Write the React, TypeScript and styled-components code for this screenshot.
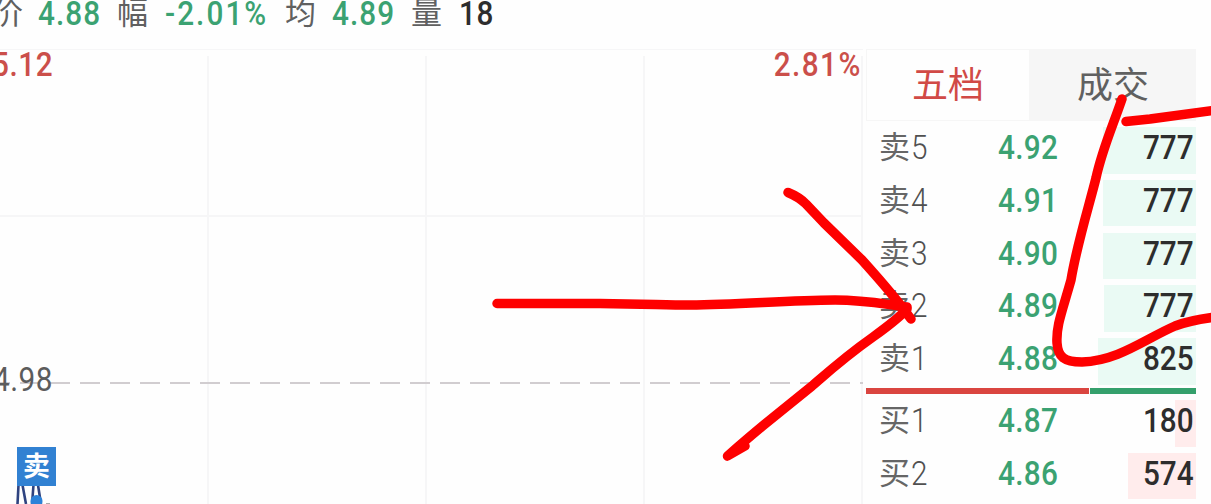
import { FC } from "react"
import styled, { createGlobalStyle } from "styled-components"

interface Quote {
  label: string
  level: string
  price: string
  volume: string
  bar: number
}

const sells: Quote[] = [
  { label: "卖", level: "5", price: "4.92", volume: "777", bar: 93 },
  { label: "卖", level: "4", price: "4.91", volume: "777", bar: 93 },
  { label: "卖", level: "3", price: "4.90", volume: "777", bar: 93 },
  { label: "卖", level: "2", price: "4.89", volume: "777", bar: 92 },
  { label: "卖", level: "1", price: "4.88", volume: "825", bar: 98 },
]

const buys: Quote[] = [
  { label: "买", level: "1", price: "4.87", volume: "180", bar: 21 },
  { label: "买", level: "2", price: "4.86", volume: "574", bar: 68 },
]

const QuoteRow: FC<{ quote: Quote; side: "sell" | "buy" }> = ({ quote, side }) => (
  <Row>
    <Label>
      {quote.label}
      <Level>{quote.level}</Level>
    </Label>
    <Price>{quote.price}</Price>
    <VolumeCell>
      <VolumeBar $side={side} style={{ width: quote.bar }} />
      <Volume>{quote.volume}</Volume>
    </VolumeCell>
  </Row>
)

const App: FC = () => {
  return (
    <Page>
      <GlobalStyle />
      <Summary>
        <Name $width={46}>价</Name>
        <Value $width={79}>4.88</Value>
        <Name $width={48}>幅</Name>
        <Value $width={120} $tracking={2.3}>
          -2.01%
        </Value>
        <Name $width={47}>均</Name>
        <Value $width={79}>4.89</Value>
        <Name $width={48}>量</Name>
        <Value $width={50} $tracking={0.6} $dark>
          18
        </Value>
      </Summary>
      <Body>
        <Chart>
          <ChartCanvas width="863" height="455" viewBox="0 0 863 455">
            <g stroke="#f6f6f7" strokeWidth="2">
              <path d="M0 .5H863" strokeWidth="1" />
              <path d="M208 7V455M426 7V455M644 7V455M862 7V455" />
              <path d="M0 167H861" />
            </g>
            <path d="M-10 334H863" stroke="#d1cdd0" strokeWidth="2" strokeDasharray="20 10" />
            <g stroke="#2f4380" strokeWidth="2.6" fill="none">
              <path d="M18.5 436L17.5 455M22.5 436L26 455M33.5 436L32 455M38 436L41 455" />
            </g>
            <circle cx="36.5" cy="452" r="6" fill="#2b82d9" />
            <path d="M46 454.5H50" stroke="#aaa" strokeWidth="1" />
          </ChartCanvas>
          <TopPrice>5.12</TopPrice>
          <TopPercent>2.81%</TopPercent>
          <MidPrice>4.98</MidPrice>
          <SellMark>卖</SellMark>
        </Chart>
        <Book>
          <Tabs>
            <Tab $active>五档</Tab>
            <Tab>成交</Tab>
          </Tabs>
          <Rows>
            {sells.map((q) => (
              <QuoteRow key={q.level} quote={q} side="sell" />
            ))}
          </Rows>
          <Ratio>
            <RatioBuy />
            <RatioSell />
          </Ratio>
          <Rows>
            {buys.map((q) => (
              <QuoteRow key={q.level} quote={q} side="buy" />
            ))}
          </Rows>
        </Book>
      </Body>
      <Marker width="1211" height="504" viewBox="0 0 1211 504">
        <path d="M497 303.5H600C650 304 665 305 690 305C740 304.5 785 300.5 835 300C865 300 880 303.5 907 307" />
        <path d="M788 192.5Q799 197 806 204L824 223L862 260C880 280 892 294 902 307L911 319" />
        <path d="M907 309Q898 319 873 337C846 356 835 366 812 386L765 424Q748 438 727.5 456L745 446" />
        <path d="M1122 99C1112 128 1102 150 1096 178C1089 206 1077 244 1071 280C1062 312 1056 326 1057 343C1058 357 1064 362 1082 362C1118 361 1145 339 1175 326Q1191 320 1216 317" />
        <path d="M1126 121.5L1150 119L1216 110" />
      </Marker>
    </Page>
  )
}
export default App

const GlobalStyle = createGlobalStyle`
  body {
    margin: 0;
    background: #fefefe;
    overflow: hidden;
  }
  * {
    box-sizing: border-box;
  }
`

const Page = styled.div`
  position: relative;
  width: 1211px;
  height: 504px;
  overflow: hidden;
  font-family: Roboto, "Noto Sans CJK SC", sans-serif;
  font-size: 33px;
  white-space: nowrap;
`

const Summary = styled.div`
  display: flex;
  align-items: flex-start;
  height: 49px;
  margin-left: -8px;
`

const Name = styled.span<{ $width: number }>`
  flex: none;
  width: ${(p) => p.$width}px;
  font-family: "Noto Sans CJK SC", sans-serif;
  font-size: 31px;
  line-height: 22px;
  color: #606060;
`

// condensed numerals: the glyphs are squeezed, the tracking is opened up
const Value = styled.span<{ $width: number; $tracking?: number; $dark?: boolean }>`
  flex: none;
  width: ${(p) => p.$width}px;
  font-weight: 500;
  line-height: 28px;
  letter-spacing: ${(p) => p.$tracking ?? 1.2}px;
  transform: scaleX(0.9);
  transform-origin: 0 50%;
  color: ${(p) => (p.$dark ? "#2d2d2d" : "#3ba272")};
`

const Body = styled.div`
  display: flex;
  height: 455px;
`

const Chart = styled.div`
  position: relative;
  flex: none;
  width: 866px;
`

const ChartCanvas = styled.svg`
  display: block;
`

const ChartLabel = styled.span`
  position: absolute;
  font-size: 33px;
  line-height: 34px;
  letter-spacing: 0.6px;
  transform: scaleX(0.9);
`

const TopPrice = styled(ChartLabel)`
  top: -1px;
  left: -8px;
  transform-origin: 0 50%;
  font-weight: 500;
  color: #cb4f4a;
`

const TopPercent = styled(ChartLabel)`
  top: -1px;
  right: 4px;
  transform-origin: 100% 50%;
  font-weight: 500;
  letter-spacing: 1.6px;
  color: #cb4f4a;
`

const MidPrice = styled(ChartLabel)`
  top: 314px;
  left: -7px;
  transform-origin: 0 50%;
  color: #5c5c5c;
`

const SellMark = styled.div`
  position: absolute;
  top: 398px;
  left: 17px;
  width: 39px;
  height: 39px;
  background: #3181d2;
  color: #fff;
  font-family: "Noto Sans CJK SC", sans-serif;
  font-size: 27px;
  font-weight: 700;
  line-height: 36px;
  text-align: center;
`

const Book = styled.div`
  flex: none;
  width: 330px;
`

const Tabs = styled.div`
  display: grid;
  grid-template-columns: 164px 166px;
  height: 72px;
`

const Tab = styled.div<{ $active?: boolean }>`
  border: 1px solid #f6f6f6;
  background: ${(p) => (p.$active ? "#fefefe" : "#f6f6f6")};
  color: ${(p) => (p.$active ? "#d14a46" : "#606060")};
  font-family: "Noto Sans CJK SC", sans-serif;
  font-size: 36px;
  line-height: 65px;
  text-align: center;
`

const Rows = styled.div`
  display: grid;
  grid-auto-rows: 46.5px;
  row-gap: 6.25px;
  padding-top: 6px;
`

const Row = styled.div`
  display: grid;
  grid-template-columns: 132px 98px 100px;
  line-height: 41px;
`

const Label = styled.div`
  display: flex;
  padding-left: 13px;
  font-family: "Noto Sans CJK SC", sans-serif;
  font-size: 31px;
  font-weight: 400;
  line-height: 35px;
  color: #666;
`

const Level = styled.span`
  margin-left: 1px;
  font-family: Roboto, sans-serif;
  font-size: 33px;
  font-weight: 300;
  line-height: 41px;
  transform: scaleX(0.9);
  transform-origin: 0 50%;
  color: #505050;
`

const Price = styled.div`
  font-weight: 500;
  transform: scaleX(0.9);
  transform-origin: 0 50%;
  letter-spacing: 0.4px;
  color: #3ba272;
`

const VolumeCell = styled.div`
  position: relative;
  height: 46.5px;
  text-align: right;
`

const VolumeBar = styled.div<{ $side: "sell" | "buy" }>`
  position: absolute;
  top: 0;
  right: 0;
  height: 100%;
  background: ${(p) => (p.$side === "sell" ? "#eafaf4" : "#ffecec")};
`

const Volume = styled.span`
  display: inline-block;
  position: relative;
  padding-right: 2.5px;
  font-weight: 500;
  transform: scaleX(0.9);
  transform-origin: 100% 50%;
  color: #2d2d2d;
`

const Ratio = styled.div`
  display: flex;
  gap: 1px;
  height: 6px;
  margin-top: 3.5px;
`

const RatioBuy = styled.div`
  width: 223px;
  background: #da4540;
`

const RatioSell = styled.div`
  flex: 1;
  background: #35a06c;
`

// hand-drawn strokes over the whole screen
const Marker = styled.svg`
  position: absolute;
  top: 0;
  left: 0;
  pointer-events: none;
  fill: none;
  stroke: #fe0000;
  stroke-width: 9.5px;
  stroke-linecap: round;
  stroke-linejoin: round;
`
